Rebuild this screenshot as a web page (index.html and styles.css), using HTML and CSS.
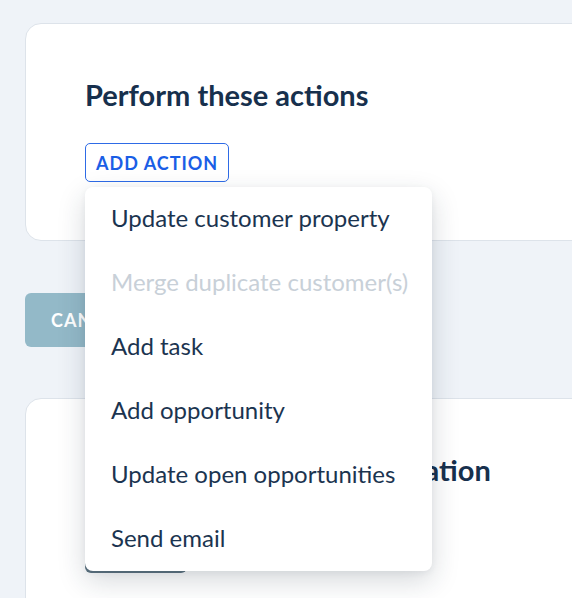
FILE: index.html
```html
<!DOCTYPE html>
<html lang="en">
<head>
<meta charset="utf-8">
<title>Automation actions</title>
<link rel="stylesheet" href="styles.css">
</head>
<body>
<div class="page">
  <section class="card">
    <h2 class="card-title">Perform these actions</h2>
    <div class="menu-anchor">
      <button class="btn-outline" type="button">ADD ACTION</button>
      <ul class="dropdown">
        <li class="dropdown-item">Update customer property</li>
        <li class="dropdown-item is-disabled">Merge duplicate customer(s)</li>
        <li class="dropdown-item">Add task</li>
        <li class="dropdown-item">Add opportunity</li>
        <li class="dropdown-item">Update open opportunities</li>
        <li class="dropdown-item">Send email</li>
      </ul>
    </div>
  </section>

  <div class="actions-row">
    <button class="btn-cancel" type="button">CANCEL</button>
  </div>

  <section class="card card-tall">
    <h2 class="card-title">Name and save this automation</h2>
    <button class="btn-dark" type="button">SAVE</button>
  </section>
</div>
</body>
</html>
```

FILE: styles.css
```css
* { box-sizing: border-box; }

html, body {
  margin: 0;
  padding: 0;
  height: 100%;
  overflow: hidden;
}

body {
  background: #eff3f8;
  font-family: "Lato", "Liberation Sans", sans-serif;
  color: #17304d;
}

.page {
  padding: 23px 0 0 25px;
  display: flex;
  flex-direction: column;
}

.card {
  background: #ffffff;
  border: 1px solid #dde3ea;
  border-radius: 16px 0 0 16px;
  margin-right: -40px;
  padding: 53px 0 58px 59px;
  display: flex;
  flex-direction: column;
  align-items: flex-start;
}

.card-tall {
  min-height: 300px;
}

.card-title {
  margin: 0;
  font-size: 29px;
  line-height: 36px;
  font-weight: 700;
  color: #17304d;
  white-space: nowrap;
}

.menu-anchor {
  position: relative;
  margin-top: 30px;
}

.btn-outline {
  display: inline-flex;
  align-items: center;
  height: 39px;
  padding: 0 10px 0 10px;
  border: 1px solid #2e6be6;
  border-radius: 5px;
  background: #ffffff;
  color: #1a5ee6;
  font-family: inherit;
  font-size: 18px;
  font-weight: 700;
  letter-spacing: 1px;
}

.dropdown {
  position: absolute;
  top: 44px;
  left: 0;
  width: 347px;
  margin: 0;
  padding: 0;
  list-style: none;
  background: #ffffff;
  border-radius: 8px;
  box-shadow: 0 10px 28px rgba(30, 45, 62, 0.18), 0 2px 6px rgba(30, 45, 62, 0.06);
  z-index: 10;
}

.dropdown-item {
  height: 64px;
  display: flex;
  align-items: center;
  padding: 0 0 4px 26px;
  font-size: 24px;
  color: #1b3450;
  white-space: nowrap;
}

.dropdown-item.is-disabled {
  color: #c8d0d8;
}

.actions-row {
  display: flex;
  margin-top: 52px;
  margin-bottom: 51px;
}

.btn-cancel {
  height: 54px;
  width: 130px;
  padding: 0 26px;
  border: none;
  border-radius: 6px;
  background: #93b9c8;
  color: #ffffff;
  font-family: inherit;
  font-size: 18px;
  font-weight: 700;
  letter-spacing: 1px;
  text-align: left;
}

.btn-dark {
  margin-top: 30px;
  height: 55px;
  width: 102px;
  border: none;
  border-radius: 6px;
  background: #5d7381;
  color: #ffffff;
  font-family: inherit;
  font-size: 18px;
  font-weight: 700;
  letter-spacing: 1px;
}
```
